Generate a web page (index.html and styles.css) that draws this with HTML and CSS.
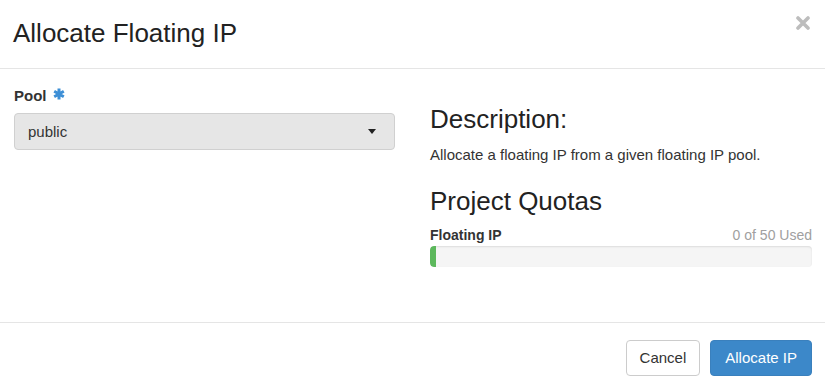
FILE: index.html
```html
<!DOCTYPE html>
<html lang="en">
<head>
    <meta charset="UTF-8">
    <meta name="viewport" content="width=device-width, initial-scale=1.0">
    <title>Allocate Floating IP</title>
    <link rel="stylesheet" href="styles.css">
</head>
<body>
    <div class="modal-content">
        <div class="modal-header">
            <h4 class="modal-title">Allocate Floating IP</h4>
            <button type="button" class="close" aria-label="Close">
                <svg width="14" height="14" viewBox="0 0 14 14">
                    <path d="M2 2 L12 12 M12 2 L2 12" stroke="#bdbdbd" stroke-width="3.6" stroke-linecap="round"/>
                </svg>
            </button>
        </div>

        <div class="modal-body">
            <div class="left">
                <label class="field-label">Pool
                    <svg class="required" width="12" height="12" viewBox="0 0 12 12">
                        <path d="M6 0.5 V11.5 M1.2 3.25 L10.8 8.75 M10.8 3.25 L1.2 8.75" stroke="#3d8fd6" stroke-width="3"/>
                    </svg>
                </label>
                <div class="select">
                    <span>public</span>
                    <span class="caret"></span>
                </div>
            </div>

            <div class="right">
                <h3>Description:</h3>
                <p>Allocate a floating IP from a given floating IP pool.</p>
                <h3 class="quota-title">Project Quotas</h3>
                <div class="quota-row">
                    <strong>Floating IP</strong>
                    <span class="quota-used">0 of 50 Used</span>
                </div>
                <div class="progress">
                    <div class="progress-bar" style="width: 1.6%;"></div>
                </div>
            </div>
        </div>

        <div class="modal-footer">
            <button type="button" class="btn btn-default">Cancel</button>
            <button type="button" class="btn btn-primary">Allocate IP</button>
        </div>
    </div>
</body>
</html>
```

FILE: styles.css
```css
body {
    margin: 0;
    font-family: "Liberation Sans", Arial, sans-serif;
    font-size: 15px;
    line-height: 21px;
    color: #333;
    background: #fff;
}
.modal-content {
    width: 825px;
    height: 389px;
    background: #fff;
}
.modal-header {
    display: flex;
    justify-content: space-between;
    align-items: flex-start;
    padding: 19px 13px 20px 13px;
    border-bottom: 1px solid #e5e5e5;
}
.modal-title {
    margin: 0;
    font-size: 26px;
    font-weight: normal;
    line-height: 29px;
    color: #222;
}
.close {
    background: none;
    border: none;
    padding: 0;
    margin-top: -3px;
    margin-right: 2px;
    cursor: pointer;
}
.modal-body {
    display: grid;
    grid-template-columns: 381px 382px;
    column-gap: 35px;
    padding: 16px 13px 55px 14px;
}
.field-label {
    display: block;
    font-weight: bold;
    margin-bottom: 7px;
}
.required {
    margin-left: 2px;
    vertical-align: 1px;
}
.select {
    display: flex;
    justify-content: space-between;
    align-items: center;
    height: 35px;
    padding: 0 18px 0 13px;
    background: #e6e6e6;
    border: 1px solid #d0d0d0;
    border-radius: 4px;
}
.caret {
    width: 0;
    height: 0;
    border-top: 5px solid #222;
    border-left: 4px solid transparent;
    border-right: 4px solid transparent;
}
h3 {
    margin: 20px 0 10px 0;
    font-size: 26px;
    font-weight: normal;
    line-height: 29px;
    color: #222;
}
.right p {
    margin: 0;
}
.quota-title {
    margin-top: 22px;
    margin-bottom: 9px;
}
.quota-row {
    display: flex;
    justify-content: space-between;
    font-size: 14px;
    line-height: 20px;
}
.quota-used {
    color: #a0a0a0;
}
.progress {
    height: 21px;
    margin-top: 1px;
    background: #f5f5f5;
    border-radius: 4px;
    box-shadow: inset 0 1px 2px rgba(0,0,0,0.1);
    overflow: hidden;
}
.progress-bar {
    height: 100%;
    background: #5cb85c;
    border-radius: 4px 0 0 4px;
}
.modal-footer {
    display: flex;
    justify-content: flex-end;
    gap: 10px;
    padding: 17px 13px;
    border-top: 1px solid #e5e5e5;
}
.btn {
    font-family: "Liberation Sans", Arial, sans-serif;
    font-size: 15px;
    line-height: 20px;
    padding: 7px 13px;
    border-radius: 4px;
    cursor: pointer;
}
.btn-default {
    background: #fff;
    color: #333;
    border: 1px solid #ccc;
}
.btn-primary {
    background: #3c88c9;
    color: #fff;
    border: 1px solid #3a80bd;
    padding: 7px 14px;
}
```
